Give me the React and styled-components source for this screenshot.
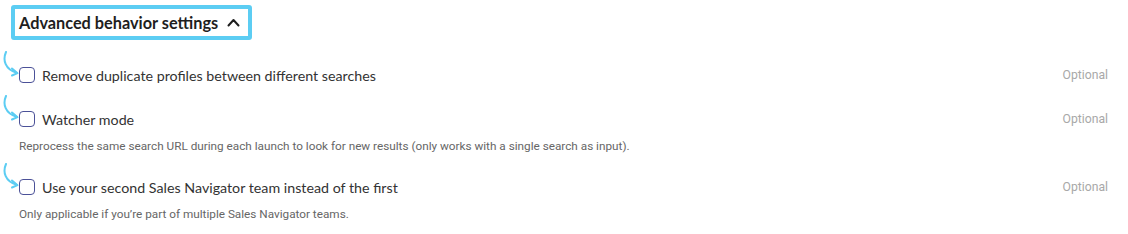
import React from 'react'
import styled, { createGlobalStyle } from 'styled-components'

const Global = createGlobalStyle`
  body {
    margin: 0;
    background: #fff;
    font-family: 'Lato', 'Liberation Sans', sans-serif;
  }
`

const Page = styled.div`
  width: 1128px;
  height: 234px;
  padding: 5px 20px 0 11px;
  box-sizing: border-box;
`

const Header = styled.div`
  display: inline-flex;
  align-items: center;
  gap: 9px;
  height: 35px;
  box-sizing: border-box;
  border: 4px solid #5ccdf3;
  border-radius: 3px;
  padding: 0 8px 0 4px;
  font-size: 16.3px;
  font-weight: 700;
  color: #1e1e1e;
`

const List = styled.div`
  display: flex;
  flex-direction: column;
  gap: 24px;
  margin-top: 25px;
  padding-left: 8px;
`

const Row = styled.label`
  position: relative;
  display: flex;
  align-items: center;
  height: 20px;
`

const Box = styled.span`
  width: 16px;
  height: 16px;
  box-sizing: border-box;
  border: 1.5px solid #4b5198;
  border-radius: 4px;
  flex-shrink: 0;
`

const Label = styled.span`
  margin-left: 7px;
  font-size: 14.25px;
  color: #333;
  flex: 1;
`

const Optional = styled.span`
  font-size: 12.2px;
  color: #a8a8a8;
  font-family: 'Roboto', sans-serif;
`

const Description = styled.div`
  margin-top: 10px;
  font-size: 11.75px;
  line-height: 14px;
  color: #666;
  font-family: 'Roboto', sans-serif;
`

const ArrowMark = styled.svg`
  position: absolute;
  left: -19px;
  top: -14px;
`

function Arrow() {
  return (
    <ArrowMark width="20" height="26" viewBox="0 0 20 26" fill="none">
      <path d="M6 1 C2.5 9, 5 18.5, 17 22" stroke="#5ccdf3" strokeWidth="2" strokeLinecap="round" />
      <path d="M12 17.5 L17.5 22.2 L12 24.5" stroke="#5ccdf3" strokeWidth="2" strokeLinecap="round" strokeLinejoin="round" />
    </ArrowMark>
  )
}

function Chevron() {
  return (
    <svg width="13" height="9" viewBox="0 0 13 9" fill="none">
      <path d="M1.5 7.5 L6.5 2 L11.5 7.5" stroke="#1e1e1e" strokeWidth="2" strokeLinecap="round" strokeLinejoin="round" />
    </svg>
  )
}

const options = [
  { label: 'Remove duplicate profiles between different searches' },
  {
    label: 'Watcher mode',
    description:
      'Reprocess the same search URL during each launch to look for new results (only works with a single search as input).',
  },
  {
    label: 'Use your second Sales Navigator team instead of the first',
    description: 'Only applicable if you\u2019re part of multiple Sales Navigator teams.',
  },
]

export default function App() {
  return (
    <Page>
      <Global />
      <Header>
        Advanced behavior settings
        <Chevron />
      </Header>
      <List>
        {options.map((o) => (
          <div key={o.label}>
            <Row>
              <Arrow />
              <Box />
              <Label>{o.label}</Label>
              <Optional>Optional</Optional>
            </Row>
            {o.description && <Description>{o.description}</Description>}
          </div>
        ))}
      </List>
    </Page>
  )
}
